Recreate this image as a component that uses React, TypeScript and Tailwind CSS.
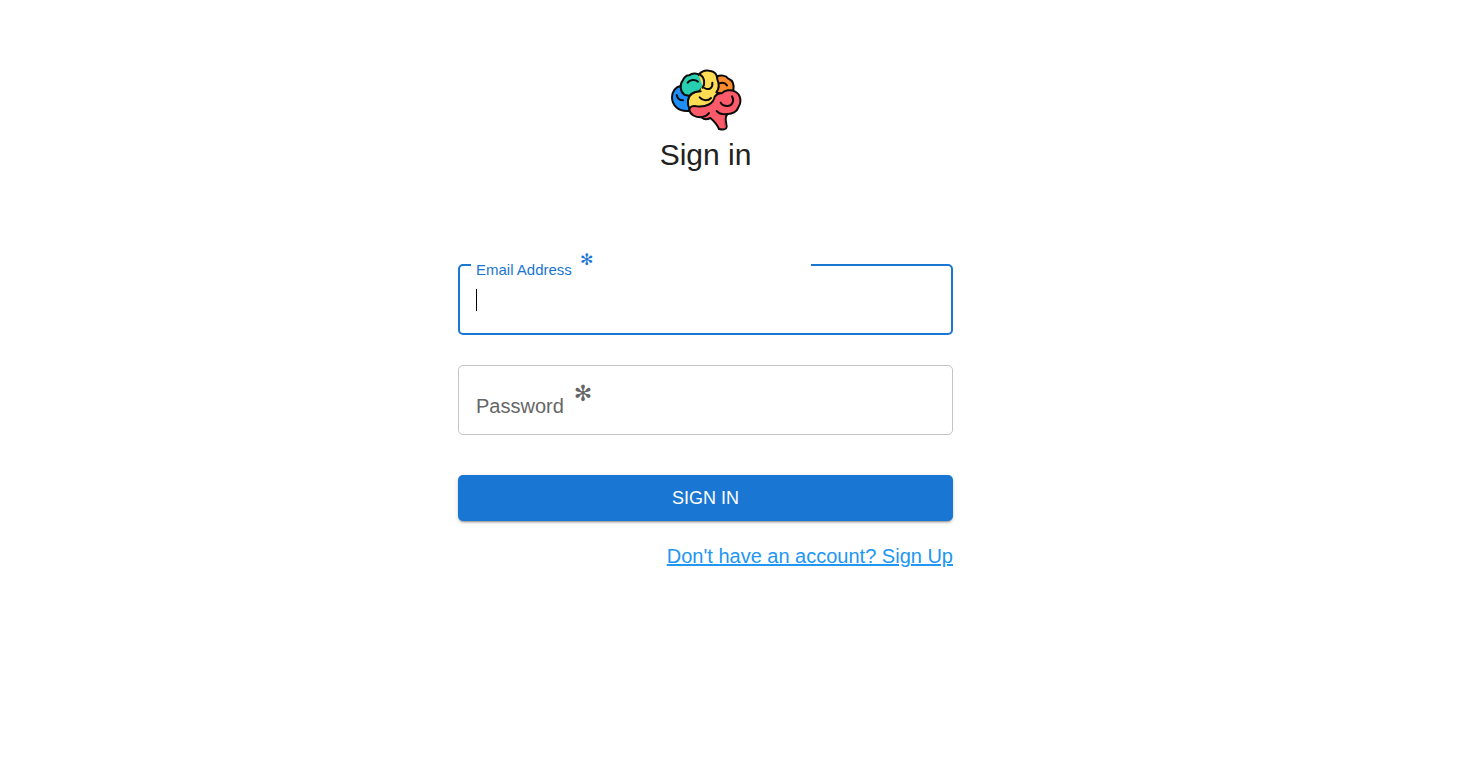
import { useState } from "react";

function BrainLogo() {
  return (
    <svg
      width="72"
      height="64"
      viewBox="18 18 216 192"
      fill="none"
      stroke="#0b0b0b"
      strokeWidth="6"
      strokeLinecap="round"
      strokeLinejoin="round"
      role="img"
      aria-label="Brain"
    >
      <path fill="#1e8ffa" d="M51 72C34 74 24 90 24 106C24 130 44 150 74 147L86 120L64 76Z" />
      <path d="M38 99C40 109 47 115 57 115" />
      <path fill="#27cfb0" d="M61 98C49 90 46 68 56 56C61 45 68 40 75 40C87 31 101 34 109 41L122 70L104 90C94 90 84 94 77 102Z" />
      <path d="M71 62C77 53 93 51 102 59" />
      <path fill="#fb8b2c" d="M157 44C170 38 186 40 192 49C207 55 211 70 208 85L180 96L156 92Z" />
      <path d="M166 64C176 60 185 64 189 70" />
      <path fill="#fedd54" stroke="none" d="M104 38C112 28 124 24 136 26C152 28 160 38 160 52C166 66 165 80 158 92L150 112C140 130 112 134 92 132C82 132 76 136 76 142C68 120 72 98 88 93L108 88L115 70Z" />
      <path d="M104 38C112 28 124 24 136 26C152 28 160 38 160 52C166 66 164 82 157 91" />
      <path d="M108 38C122 46 124 66 116 77" />
      <path d="M110 88C90 89 74 98 72 116C71 126 73 134 76 140" />
      <path d="M121 78C135 86 147 78 145 62" />
      <path d="M107 106C116 117 132 118 141 108" />
      <path fill="#fd5b69" d="M152 104C160 95 167 93 173 94C182 84 199 82 212 88C232 97 233 121 223 136C219 149 204 157 190 156C185 162 185 166 185 173L188 195C187 203 178 204 165 201C160 189 151 178 139 168C128 174 118 171 113 166C94 167 78 158 76 143C77 132 88 131 98 133C126 136 149 125 152 104Z" />
      <path d="M113 166C124 164 131 159 135 153M158 147C166 156 177 158 190 156" />
      <path d="M204 103C213 119 202 132 190 132C180 132 173 128 170 122" />
      <path stroke="#d84857" strokeWidth="4" d="M180 170L183 194" />
    </svg>
  );
}

function Asterisk({ className }: { className: string }) {
  return (
    <span aria-hidden="true" className={`font-["DejaVu_Sans",sans-serif] ${className}`}>
      ✻
    </span>
  );
}

export default function App() {
  const [email, setEmail] = useState("");
  const [password, setPassword] = useState("");

  return (
    <div className='min-h-screen bg-white pr-[62px] font-["Liberation_Sans",Arial,sans-serif] text-[#212121]'>
      <main className="mx-auto flex w-full max-w-[495px] flex-col items-center pt-[68px]">
        <BrainLogo />
        <h1 className="mt-1 text-[30px] leading-[38px]">Sign in</h1>

        <form className="mt-[90px] flex w-full flex-col" onSubmit={(e) => e.preventDefault()}>
          <div className="relative h-[71px]">
            <fieldset
              aria-hidden="true"
              className="pointer-events-none absolute inset-0 rounded-[5px] border-2 border-[#1976d2] pl-[11px]"
            >
              <legend className="h-0.5 w-[340px] max-w-3/4" />
            </fieldset>
            <label htmlFor="email" className="absolute left-[18px] -top-1 flex text-[15px] leading-5 text-[#1976d2]">
              Email Address
              <Asterisk className="-mt-2.5 ml-2 text-[16px]" />
            </label>
            <input
              id="email"
              type="email"
              required
              autoComplete="email"
              value={email}
              onChange={(e) => setEmail(e.target.value)}
              className="h-full w-full bg-transparent px-[18px] text-[20px] caret-transparent outline-none"
            />
            {email === "" && <span className="pointer-events-none absolute left-[18px] top-[25px] h-[22px] w-px bg-black" />}
          </div>

          <div className="relative mt-[30px] h-[70px]">
            <label
              htmlFor="password"
              className="pointer-events-none absolute left-[18px] top-[29px] flex text-[20px] leading-6 text-[#666666]"
            >
              Password
              <Asterisk className="-mt-3 ml-2.5 text-[22px]" />
            </label>
            <input
              id="password"
              type="password"
              required
              autoComplete="current-password"
              value={password}
              onChange={(e) => setPassword(e.target.value)}
              className="h-full w-full rounded-[5px] border border-[#c4c4c4] bg-transparent px-[18px] text-[20px] outline-none"
            />
          </div>

          <button
            type="submit"
            className="mt-10 h-[46px] w-full rounded-[5px] bg-[#1976d2] text-[18px] leading-8 text-white shadow-[0_3px_1px_-2px_rgba(0,0,0,0.2),0_2px_2px_0_rgba(0,0,0,0.14),0_1px_5px_0_rgba(0,0,0,0.12)]"
          >
            SIGN IN
          </button>

          <a href="#signup" className="mt-5 self-end text-[20px] leading-[30px] text-[#2196f3] underline">
            Don't have an account? Sign Up
          </a>
        </form>
      </main>
    </div>
  );
}
